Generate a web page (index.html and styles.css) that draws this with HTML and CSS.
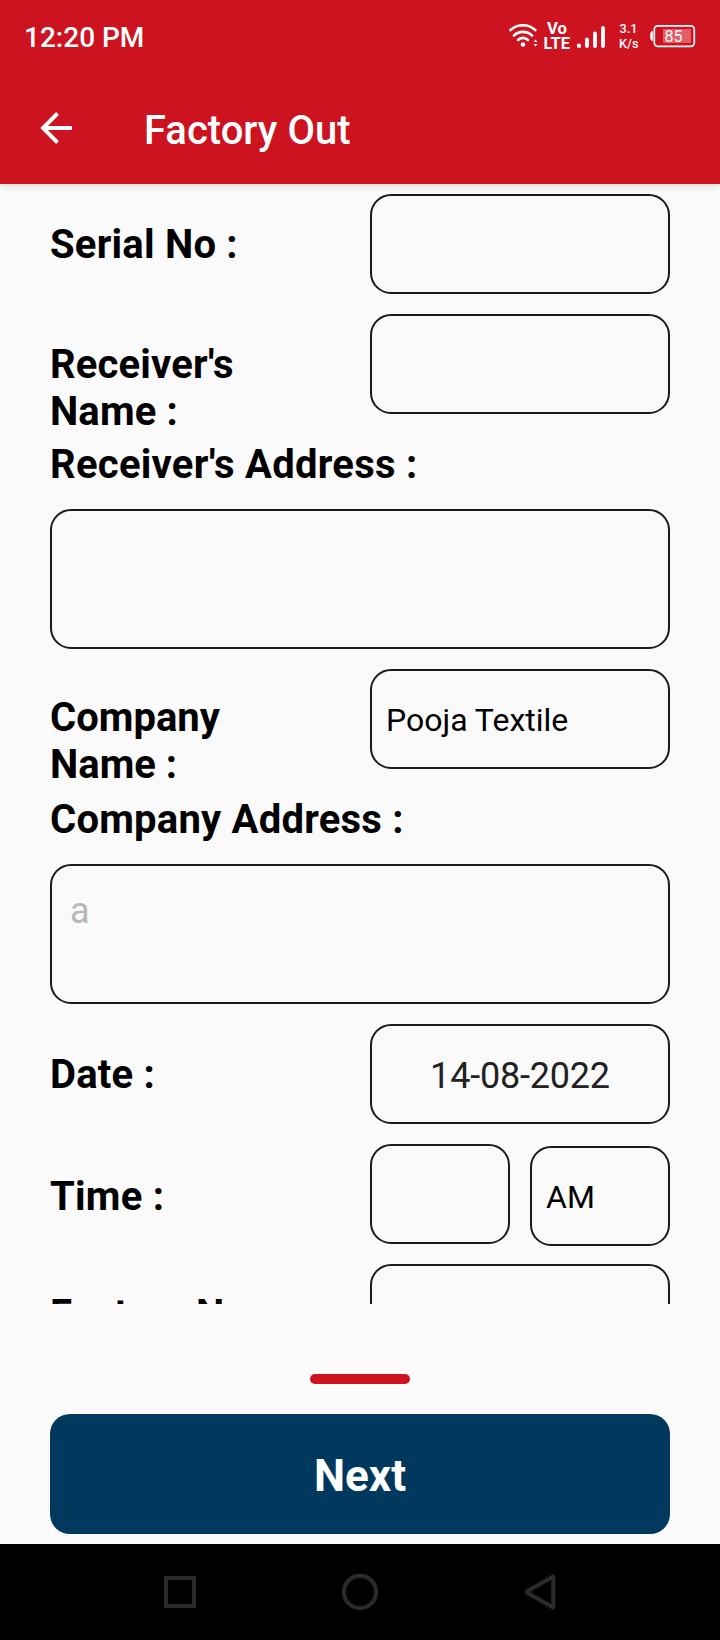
FILE: index.html
```html
<!DOCTYPE html>
<html lang="en">
<head>
<meta charset="utf-8">
<title>Factory Out</title>
<link rel="stylesheet" href="styles.css">
</head>
<body>
<div class="screen">
  <header class="header">
    <div class="status">
      <span class="clock">12:20 PM</span>
      <svg class="status-icons" width="220" height="60" viewBox="500 0 220 60" fill="none" stroke="#fff" stroke-linecap="round">
        <path d="M510.500 30 A18.500 18.500 0 0 1 535.300 30 M514 35.500 A13 13 0 0 1 532 35.500 M518 40 A7 7 0 0 1 528 40" stroke-width="2.700"/>
        <circle cx="523" cy="44.500" r="2.300" fill="#fff" stroke="none"/>
        <path d="M533.500 42 L535.500 39.500 L537.500 42Z M533.500 44 L535.500 46.500 L537.500 44Z" fill="#fff" stroke="none"/>
        <g class="svg-text">
          <text class="volte" x="547" y="34" textLength="20" lengthAdjust="spacingAndGlyphs">Vo</text>
          <text class="volte" x="543.500" y="48.800" textLength="26.500" lengthAdjust="spacingAndGlyphs">LTE</text>
          <text class="speed" x="619.500" y="33.300" textLength="18" lengthAdjust="spacingAndGlyphs">3.1</text>
          <text class="speed" x="619" y="48" textLength="19.500" lengthAdjust="spacingAndGlyphs">K/s</text>
        </g>
        <circle cx="579" cy="45.700" r="2.200" fill="#fff" stroke="none"/>
        <path d="M587 39.500V46 M595 33.500V46 M603 28V46" stroke-width="3.800"/>
        <rect x="654.300" y="25.800" width="40" height="20.500" rx="3.500" stroke-width="1.700"/>
        <path d="M652 31.500Q650.800 31.500 650.800 34V38Q650.800 40.500 652 40.500Z" fill="#fff" stroke-width="1"/>
        <rect x="663" y="29" width="28" height="14" fill="#e45c66" stroke="none"/>
        <text class="charge" x="664.500" y="42" textLength="18" lengthAdjust="spacingAndGlyphs">85</text>
      </svg>
    </div>
    <div class="toolbar">
      <svg class="back" width="34" height="34" viewBox="39 111 34 34" fill="none" stroke="#fff" stroke-width="3.900"><path d="M72 128H43 M57.500 113.500L43 128L57.500 142.500"/></svg>
      <h1 class="title">Factory Out</h1>
    </div>
  </header>
  <main class="form">
    <div class="row"><label class="label">Serial No :</label><div class="field"></div></div>
    <div class="row receiver"><label class="label">Receiver's<br>Name :</label><div class="field"></div></div>
    <div class="block receiver-address"><label class="label wide">Receiver's Address :</label><div class="field area"></div></div>
    <div class="row company"><label class="label">Company<br>Name :</label><div class="field select">Pooja Textile</div></div>
    <div class="block company-address"><label class="label wide">Company Address :</label><div class="field area">a</div></div>
    <div class="row"><label class="label">Date :</label><div class="field date">14-08-2022</div></div>
    <div class="row time"><label class="label">Time :</label><div class="pair"><div class="field"></div><div class="field select meridiem">AM</div></div></div>
    <div class="row"><label class="label">Factory No :</label><div class="field"></div></div>
  </main>
  <section class="sheet">
    <div class="handle"></div>
    <button class="next">Next</button>
  </section>
  <nav class="navbar">
    <svg width="40" height="40" viewBox="0 0 40 40" class="nav-icon"><rect x="6" y="6" width="28" height="28"/></svg>
    <svg width="40" height="40" viewBox="0 0 40 40" class="nav-icon"><circle cx="20" cy="20" r="16.200"/></svg>
    <svg width="40" height="40" viewBox="0 0 40 40" class="nav-icon"><path d="M33.300 4.500V35.500L7 20.800V19.200Z" stroke-linejoin="round"/></svg>
  </nav>
</div>
</body>
</html>
```
FILE: styles.css
```css
* { box-sizing: border-box; }
body { margin: 0; background: #fafafa; font-family: Roboto, "Liberation Sans", sans-serif; }
.screen { width: 720px; height: 1640px; display: flex; flex-direction: column; overflow: hidden; background: #fafafa; }

.header { position: relative; flex: none; height: 184px; background: #cd131f; color: #fff; box-shadow: 0 2px 8px rgba(0, 0, 0, .14); }
.status { height: 76px; display: flex; justify-content: space-between; }
.clock { padding: 21px 0 0 24px; font-size: 28px; line-height: 33px; font-weight: 500; }
.status-icons { display: block; }
.svg-text, .charge { fill: #fff; stroke: none; }
.volte { font-size: 16px; font-weight: 700; }
.speed { font-size: 13.500px; font-weight: 500; }
.charge { font-size: 17px; }
.toolbar { display: flex; align-items: flex-start; padding-left: 39px; }
.back { margin-top: 35px; }
.title { margin: 31px 0 0 71px; font-size: 40px; line-height: 47px; font-weight: 500; }

.form { flex: none; height: 1120px; padding: 10px 50px 0; overflow: hidden; }
.row { display: grid; grid-template-columns: 300px 300px; justify-content: space-between; align-items: start; margin-bottom: 20px; }
.label { display: block; padding-top: 27px; font-size: 40px; line-height: 47px; font-weight: 700; letter-spacing: .22px; color: #000; white-space: nowrap; }
.receiver .label { letter-spacing: .15px; }
.company .label { padding-top: 25px; letter-spacing: 0; }
.time .label { padding-top: 29px; }
.time { height: 100px; }
.wide { padding: 0 0 21px; }
.block { margin-bottom: 20px; }
.receiver-address { margin-top: -14px; }
.receiver-address .label { letter-spacing: .27px; }
.company-address { margin-top: -12px; }
.field { height: 100px; border: 2px solid #1b1b1b; border-radius: 21px; }
.area { height: 140px; padding: 24px 18px; font-size: 36px; line-height: 42px; color: #b8b8b8; }
.select { padding: 31px 14px; font-size: 32px; line-height: 37px; color: #000; }
.date { padding-top: 29px; text-align: center; font-size: 36px; line-height: 42px; letter-spacing: -.2px; color: #212121; }
.pair { display: grid; grid-template-columns: 140px 140px; gap: 20px; }
.meridiem { margin-top: 2px; }

.sheet { flex: none; height: 220px; margin: 20px 40px 0; padding: 50px 10px 0; background: #fbfbfb; }
.handle { width: 100px; height: 10px; margin: 0 auto 30px; border-radius: 5px; background: #cd131f; }
.next { display: block; width: 100%; height: 120px; padding: 4px 0 0; border: 0; border-radius: 20px; background: #01395e; color: #fff; font: 700 44px/52px Roboto, "Liberation Sans", sans-serif; }

.navbar { flex: none; height: 96px; display: flex; justify-content: center; align-items: center; gap: 140px; background: #000; }
.nav-icon { fill: none; stroke: #2b2b2b; stroke-width: 4; }
```
